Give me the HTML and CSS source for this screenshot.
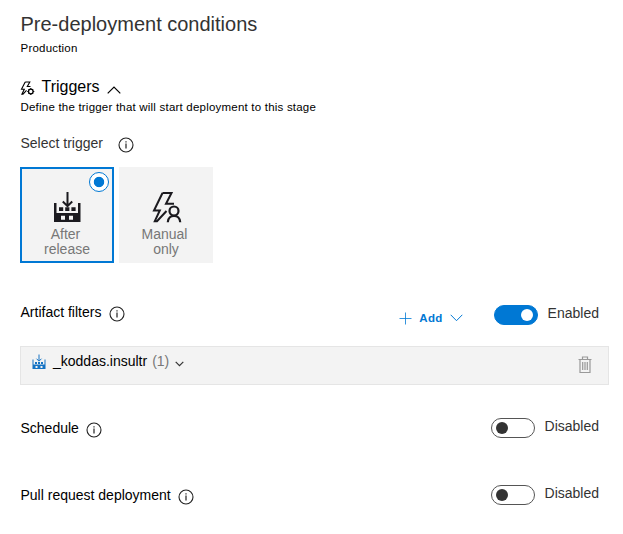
FILE: index.html
```html
<!DOCTYPE html>
<html lang="en">
<head>
<meta charset="utf-8">
<title>Pre-deployment conditions</title>
<link rel="stylesheet" href="styles.css">
</head>
<body>
<svg class="defs" width="0" height="0" aria-hidden="true">
  <symbol id="info" viewBox="0 0 16 16"><circle cx="8" cy="8" r="7" fill="none" stroke="currentColor" stroke-width="1.1"/><path d="M8 6.500V11.500M8 4.300V5.500" stroke="currentColor" stroke-width="1.200"/></symbol>
  <symbol id="build" viewBox="0 0 28 32"><path d="M14.500 1V15M9.800 10.500L14.500 15.200L19.200 10.500" fill="none" stroke="currentColor" stroke-width="2"/><path fill="currentColor" fill-rule="evenodd" d="M1 12H3.500V22H25V12H27.500V31H1ZM8 24.800V28.800H12V24.800ZM16 24.800V28.800H20V24.800ZM6 16.200H10.200V20H6ZM12.200 16.200H16.400V20H12.200ZM18.400 16.200H22.600V20H18.400Z"/></symbol>
</svg>
<main class="panel">
  <h1 class="title">Pre-deployment conditions</h1>
  <p class="stage">Production</p>

  <section class="triggers">
    <h2 class="heading">
      <svg class="bolt" viewBox="0 0 15 15"><path d="M5.200 1H9.800L7.300 5.500H10.500M5.200 1L1.500 8.300H4.300L1.900 13.200H3L6.500 9.300" fill="none" stroke="currentColor" stroke-width="1.100"/><circle cx="10.800" cy="10.500" r="2.300" fill="none" stroke="currentColor" stroke-width="1.300"/><path d="M10.800 7V8.200M10.800 12.800V14M7.300 10.500H8.500M13.100 10.500H14.300M8.400 8.100L9.100 8.800M12.500 12.200L13.200 12.900M13.200 8.100L12.500 8.800M9.100 12.200L8.400 12.900" stroke="currentColor"/></svg>
      <span>Triggers</span>
      <svg class="caret-up" viewBox="0 0 14 8"><path d="M.7 7.300L7 1L13.300 7.300" fill="none" stroke="currentColor" stroke-width="1.200"/></svg>
    </h2>
    <p class="description">Define the trigger that will start deployment to this stage</p>
    <div class="label-row select">Select trigger<svg class="info"><use href="#info"/></svg></div>
    <div class="cards">
      <div class="card selected">
        <span class="radio"></span>
        <svg class="card-icon build"><use href="#build"/></svg>
        <span class="first-word">After</span>
        <span>release</span>
      </div>
      <div class="card">
        <svg class="card-icon manual" viewBox="0 0 32 32"><path d="M12.500 2H21.500L16 12.700H24M12.500 2L4 19.500H9.800L4.800 30.200H7L16.500 20" fill="none" stroke="currentColor" stroke-width="2"/><circle cx="24" cy="20" r="4.500" fill="none" stroke="currentColor" stroke-width="2.200"/><path d="M17.800 31.200C18.300 22.700 29.700 22.700 30.200 31.200" fill="none" stroke="currentColor" stroke-width="2.200"/></svg>
        <span class="first-word">Manual</span>
        <span>only</span>
      </div>
    </div>
  </section>

  <section class="setting filters">
    <div class="label-row">Artifact filters<svg class="info"><use href="#info"/></svg></div>
    <div class="add">
      <svg class="plus" viewBox="0 0 13 13"><path d="M6.500 .5V12.500M.5 6.500H12.500" stroke="currentColor" stroke-width=".8"/></svg>
      <span>Add</span>
      <svg class="caret-add" viewBox="0 0 13 8"><path d="M.7 .8L6.500 6.700L12.300 .8" fill="none" stroke="currentColor"/></svg>
    </div>
    <div class="switch"><span class="toggle on"></span><span class="state">Enabled</span></div>
  </section>

  <div class="artifact">
    <svg class="artifact-icon" viewBox="0 0 14 16"><path d="M7 .5V7M4.500 4.700L7 7.200L9.500 4.700" fill="none" stroke="currentColor"/><path fill="currentColor" fill-rule="evenodd" d="M.5 5.500H1.500V10.500H12.500V5.500H13.500V15H.5ZM3.500 12V14H5.500V12ZM8.500 12V14H10.500V12ZM3 8H5V10H3ZM6 8H8V10H6ZM9 8H11V10H9Z"/></svg>
    <span class="artifact-name">_koddas.insultr</span>
    <span class="count">(1)</span>
    <svg class="caret-small" viewBox="0 0 9 6"><path d="M.7 .8L4.500 4.600L8.300 .8" fill="none" stroke="currentColor" stroke-width="1.200"/></svg>
    <svg class="trash" viewBox="0 0 14 18"><path d="M.5 3.500H13.500M4.500 3V1H9.500V3M2 4V16.500H12V4M4.700 6V14M7 6V14M9.300 6V14" fill="none" stroke="currentColor" stroke-width="1.200"/></svg>
  </div>

  <section class="setting plain">
    <div class="label-row">Schedule<svg class="info"><use href="#info"/></svg></div>
    <div class="switch"><span class="toggle"></span><span class="state">Disabled</span></div>
  </section>
  <section class="setting plain">
    <div class="label-row">Pull request deployment<svg class="info"><use href="#info"/></svg></div>
    <div class="switch"><span class="toggle"></span><span class="state">Disabled</span></div>
  </section>
</main>
</body>
</html>
```
FILE: styles.css
```css
* { box-sizing: border-box; }
body {
  margin: 0;
  background: #fff;
  color: #000;
  font-family: "Liberation Sans", Arial, sans-serif;
  font-size: 14px;
}
h1, h2, p { margin: 0; font-weight: normal; }
svg { display: block; flex: none; }
.defs { position: absolute; }
.panel { min-height: 534px; padding: 12px 14px 0 20px; }
.title { padding-left: .5px; font-size: 20px; line-height: 24px; color: #333; }
.stage { margin-top: 4px; padding-left: .5px; font-size: 11.5px; letter-spacing: .21px; line-height: 16px; }
.triggers { padding-top: 21px; }
.heading {
  display: flex;
  align-items: center;
  height: 20px;
  font-size: 16px;
  line-height: 20px;
}
.bolt { width: 15px; height: 15px; margin: 3px 6.5px 0 0; }
.caret-up { width: 14px; height: 8px; margin: 6px 0 0 7px; }
.description { margin-top: 2px; padding-left: .5px; font-size: 11.5px; letter-spacing: .21px; line-height: 16px; }
.label-row { display: flex; align-items: center; height: 20px; padding-left: .5px; line-height: 20px; }
.info { width: 16px; height: 16px; margin: 4px 0 0 7.5px; color: #222; }
.select { margin-top: 18px; color: #333; }
.select .info { margin-left: 15.5px; }
.cards { display: flex; gap: 5px; margin-top: 14px; }
.card {
  position: relative;
  display: flex;
  flex-direction: column;
  align-items: center;
  width: 94px;
  height: 96px;
  padding-top: 24px;
  background: #f3f3f3;
  color: #777;
  line-height: 15px;
  text-align: center;
}
.card.selected { padding-top: 22px; border: 2px solid #0078d4; }
.card-icon { height: 32px; margin-bottom: 4px; color: #1b1a1f; }
.card-icon.build { width: 28px; }
.card-icon.manual { width: 32px; }
.first-word { padding-right: 3px; }
.radio {
  position: absolute;
  top: 3px;
  right: 3px;
  width: 20px;
  height: 20px;
  border: 1px solid #0078d4;
  border-radius: 50%;
  background: radial-gradient(circle, #0078d4 4.800px, #fff 5.600px);
}
.setting { display: flex; height: 20px; }
.filters { margin-top: 40px; padding-right: 10px; }
.filters .label-row { margin-top: -1px; }
.plain { margin-top: 47px; padding-right: 10px; }
.plain .label-row { margin-top: 2px; }
.switch { display: flex; gap: 10px; margin-left: auto; }
.toggle {
  display: flex;
  align-items: center;
  width: 44px;
  height: 20px;
  padding: 0 4px;
  margin-top: 2px;
  border: 1px solid #555;
  border-radius: 10px;
}
.toggle::before {
  content: "";
  width: 12px;
  height: 12px;
  border-radius: 50%;
  background: #333;
}
.toggle.on { justify-content: flex-end; background: #0078d4; border-color: #0078d4; }
.toggle.on::before { background: #fff; }
.state { line-height: 20px; color: #333; }
.add {
  display: flex;
  align-items: center;
  height: 20px;
  margin: 5px 0 0 auto;
  color: #0078d4;
  font-size: 11.5px;
  letter-spacing: .3px;
  font-weight: bold;
}
.plus { width: 13px; height: 13px; margin-right: 7px; }
.caret-add { width: 13px; height: 8px; margin-left: 7px; }
.filters .switch { margin-left: 31px; }
.artifact {
  display: flex;
  align-items: flex-start;
  height: 39px;
  margin-top: 23px;
  padding: 4px 16px 0 11px;
  border: 1px solid #e5e5e5;
  background: #f3f3f3;
  line-height: 20px;
}
.artifact-icon { width: 14px; height: 16px; margin: 3px 7px 0 0; color: #1473c4; }
.count { margin-left: 5px; color: #777; }
.caret-small { width: 9px; height: 6px; margin: 10px 0 0 6px; color: #333; }
.trash { width: 14px; height: 18px; margin: 5px 0 0 auto; color: #999; }
.artifact + .plain { margin-top: 31px; }
```
